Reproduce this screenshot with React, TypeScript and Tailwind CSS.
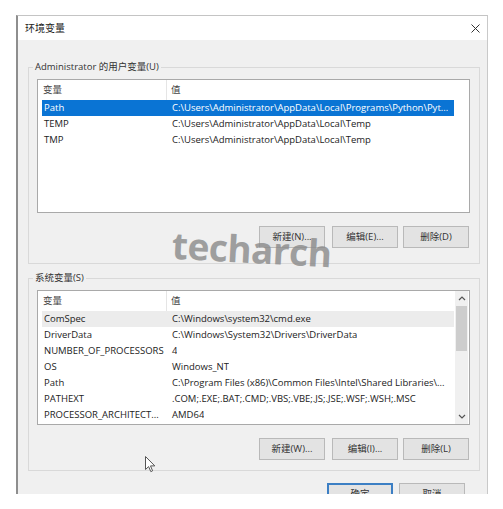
import React from "react";

const userVars = [
  { n: "Path", v: "C:\\Users\\Administrator\\AppData\\Local\\Programs\\Python\\Pyt...", sel: true },
  { n: "TEMP", v: "C:\\Users\\Administrator\\AppData\\Local\\Temp" },
  { n: "TMP", v: "C:\\Users\\Administrator\\AppData\\Local\\Temp" },
];

const sysVars = [
  { n: "ComSpec", v: "C:\\Windows\\system32\\cmd.exe", sel: true },
  { n: "DriverData", v: "C:\\Windows\\System32\\Drivers\\DriverData" },
  { n: "NUMBER_OF_PROCESSORS", v: "4" },
  { n: "OS", v: "Windows_NT" },
  { n: "Path", v: "C:\\Program Files (x86)\\Common Files\\Intel\\Shared Libraries\\..." },
  { n: "PATHEXT", v: ".COM;.EXE;.BAT;.CMD;.VBS;.VBE;.JS;.JSE;.WSF;.WSH;.MSC" },
  { n: "PROCESSOR_ARCHITECT...", v: "AMD64" },
];

function Btn({ children, className = "" }: { children: React.ReactNode; className?: string }) {
  return (
    <div
      className={
        "w-[66px] h-[22px] flex items-center justify-center bg-[#e3e3e3] border border-[#b9b9b9] text-[#333] " +
        className
      }
    >
      {children}
    </div>
  );
}

function Header() {
  return (
    <div className="flex h-[20px] items-center text-[#444] bg-white">
      <div className="w-[129px] shrink-0 h-full pl-[5px] flex items-center border-r border-[#e5e5e5]">变量</div>
      <div className="pl-[4px]">值</div>
    </div>
  );
}

function Rows({ rows, focused }: { rows: { n: string; v: string; sel?: boolean }[]; focused: boolean }) {
  return (
    <div className="flex flex-col">
      {rows.map((r, i) => (
        <div
          key={i}
          className={
            "ml-[4px] w-[412px] h-[16px] leading-[16px] flex " +
            (r.sel ? (focused ? "bg-[#0a74d4] text-white" : "bg-[#ececec] text-[#222]") : "text-[#222]")
          }
        >
          <div className="w-[125px] shrink-0 pl-[2px] whitespace-nowrap overflow-hidden">{r.n}</div>
          <div className="pl-[5px] whitespace-nowrap overflow-hidden">{r.v}</div>
        </div>
      ))}
    </div>
  );
}

function Chevron({ up }: { up?: boolean }) {
  return (
    <svg width="8" height="5" viewBox="0 0 8 5">
      <path
        d={up ? "M1 4 L4 1 L7 4" : "M1 1 L4 4 L7 1"}
        fill="none"
        stroke="#555"
        strokeWidth="1.2"
      />
    </svg>
  );
}

export default function App() {
  return (
    <div className="relative w-[503px] h-[509px] bg-white overflow-hidden font-[family-name:'Open_Sans','Noto_Sans_CJK_SC',sans-serif] text-[9.5px] leading-none text-[#1a1a1a]">
      <div className="ml-[16px] mt-[15px] w-[472px] h-[479px] border-l-2 border-t border-r border-l-[#8e8e8e] border-t-[#c4c4c4] border-r-[#c9c9c9] flex flex-col overflow-hidden">
        {/* Title bar */}
        <div className="h-[24px] shrink-0 bg-white flex items-center justify-between pl-[7px] pr-[6px]">
          <span className="text-[#222] text-[10px]">环境变量</span>
          <svg width="9" height="9" viewBox="0 0 9 9" className="mr-[1px]">
            <path d="M0.5 0.5 L8.5 8.5 M8.5 0.5 L0.5 8.5" stroke="#333" strokeWidth="1" />
          </svg>
        </div>

        {/* Body */}
        <div className="flex-1 bg-[#f0f0f0] pl-[10px] pr-[7px] pt-[20px] flex flex-col">
          {/* User variables */}
          <fieldset className="w-[452px] border border-[#d9d9d9] pl-[8px] pr-[9px] pb-[15px] pt-[5px]">
            <legend className="-ml-[4px] px-[2px] leading-[14px] text-[#333]">Administrator 的用户变量(U)</legend>
            <div className="w-[433px] h-[134px] border border-[#a9a9a9] bg-white">
              <Header />
              <Rows rows={userVars} focused />
            </div>
            <div className="flex justify-end mt-[13px] pr-[1px]">
              <Btn className="mr-[7px]">新建(N)...</Btn>
              <Btn className="mr-[5px]">编辑(E)...</Btn>
              <Btn>删除(D)</Btn>
            </div>
          </fieldset>

          {/* System variables */}
          <fieldset className="mt-[7px] w-[452px] border border-[#d9d9d9] pl-[8px] pr-[9px] pb-[10px] pt-[5px]">
            <legend className="-ml-[4px] px-[2px] leading-[14px] text-[#333]">系统变量(S)</legend>
            <div className="w-[433px] h-[135px] border border-[#a9a9a9] bg-white flex">
              <div className="flex-1 flex flex-col">
                <Header />
                <Rows rows={sysVars} focused={false} />
              </div>
              <div className="w-[13px] mr-[1px] bg-[#f0f0f0] flex flex-col items-center">
                <div className="h-[15px] flex items-center justify-center">
                  <Chevron up />
                </div>
                <div className="w-[11px] h-[45px] bg-[#cdcdcd]" />
                <div className="flex-1" />
                <div className="h-[15px] flex items-center justify-center">
                  <Chevron />
                </div>
              </div>
            </div>
            <div className="flex justify-end mt-[13px] pr-[1px]">
              <Btn className="mr-[7px]">新建(W)...</Btn>
              <Btn className="mr-[5px]">编辑(I)...</Btn>
              <Btn>删除(L)</Btn>
            </div>
          </fieldset>

          {/* OK / Cancel */}
          <div className="flex justify-end mt-[12px] pr-[15px]">
            <div className="w-[66px] h-[22px] mr-[6px] flex items-center justify-center bg-[#e3e3e3] border-2 border-[#3c7fc4] text-[#333]">
              确定
            </div>
            <Btn>取消</Btn>
          </div>
        </div>
      </div>

      {/* Watermark */}
      <div className="absolute left-[172px] top-[230px] rotate-[3deg] font-[family-name:'Open_Sans',sans-serif] font-bold text-[37px] leading-none tracking-[-0.5px] text-[#8a8a8a] opacity-80 pointer-events-none">
        techarch
      </div>

      {/* Mouse cursor */}
      <svg className="absolute left-[145px] top-[456px]" width="11" height="17" viewBox="0 0 11 17">
        <path
          d="M0.5 0.5 L0.5 13.5 L3.6 10.6 L5.8 15.6 L7.6 14.8 L5.5 9.9 L9.8 9.9 Z"
          fill="#fff"
          stroke="#555"
          strokeWidth="1"
          strokeLinejoin="round"
        />
      </svg>
    </div>
  );
}
